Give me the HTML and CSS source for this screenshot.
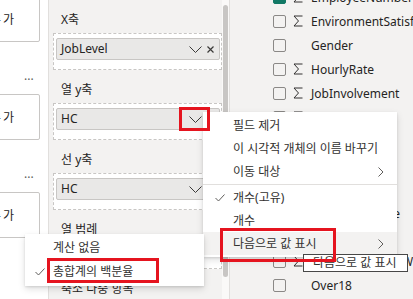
FILE: index.html
```html
<!DOCTYPE html>
<html lang="ko">
<head>
    <meta charset="UTF-8">
    <meta name="viewport" content="width=device-width, initial-scale=1.0">
    <title>시각화 필드</title>
    <link rel="stylesheet" href="styles.css">
</head>
<body>
<div class="app">
    <aside class="left">
        <div class="card first"><span>추가</span></div>
        <div class="more">···</div>
        <div class="card"><span>추가</span></div>
        <div class="more">···</div>
        <div class="card"><span>추가</span></div>
    </aside>

    <section class="viz">
        <div class="wells">
            <div class="label">X축</div>
            <div class="well">
                <div class="pill">
                    <span class="name">JobLevel</span>
                    <svg class="chev" width="13" height="7" viewBox="0 0 13 7"><polyline points="0.5,0.5 6.5,6.5 12.5,0.5"/></svg>
                    <svg class="close" width="7" height="7" viewBox="0 0 7 7"><path d="M0.5 0.5L6.5 6.5M6.5 0.5L0.5 6.5"/></svg>
                </div>
                <div class="drop"></div>
            </div>

            <div class="label">열 y축</div>
            <div class="well">
                <div class="pill">
                    <span class="name">HC</span>
                    <svg class="chev" width="13" height="7" viewBox="0 0 13 7"><polyline points="0.5,0.5 6.5,6.5 12.5,0.5"/></svg>
                    <span class="close"></span>
                </div>
                <div class="drop"></div>
            </div>

            <div class="label">선 y축</div>
            <div class="well">
                <div class="pill">
                    <span class="name">HC</span>
                    <svg class="chev" width="13" height="7" viewBox="0 0 13 7"><polyline points="0.5,0.5 6.5,6.5 12.5,0.5"/></svg>
                    <span class="close"></span>
                </div>
                <div class="drop"></div>
            </div>

            <div class="label">열 범례</div>
            <div class="well empty"></div>

            <div class="label">축소 다중 항목</div>
        </div>
        <div class="track"><div class="thumb"></div></div>
    </section>

    <section class="fields">
        <ul class="list">
            <li><span class="box on"></span><span class="sum"><svg width="10" height="12" viewBox="0 0 10 12"><polyline points="9.5,1 1,1 5.5,6 1,11 9.5,11"/></svg></span>EmployeeNumber</li>
            <li><span class="box"></span><span class="sum"><svg width="10" height="12" viewBox="0 0 10 12"><polyline points="9.5,1 1,1 5.5,6 1,11 9.5,11"/></svg></span>EnvironmentSatisfaction</li>
            <li><span class="box"></span><span class="sum"></span>Gender</li>
            <li><span class="box"></span><span class="sum"><svg width="10" height="12" viewBox="0 0 10 12"><polyline points="9.5,1 1,1 5.5,6 1,11 9.5,11"/></svg></span>HourlyRate</li>
            <li><span class="box"></span><span class="sum"><svg width="10" height="12" viewBox="0 0 10 12"><polyline points="9.5,1 1,1 5.5,6 1,11 9.5,11"/></svg></span>JobInvolvement</li>
            <li><span class="box"></span><span class="sum"><svg width="10" height="12" viewBox="0 0 10 12"><polyline points="9.5,1 1,1 5.5,6 1,11 9.5,11"/></svg></span>JobLevel</li>
            <li><span class="box"></span><span class="sum"></span>JobRole</li>
            <li><span class="box"></span><span class="sum"><svg width="10" height="12" viewBox="0 0 10 12"><polyline points="9.5,1 1,1 5.5,6 1,11 9.5,11"/></svg></span>JobSatisfaction</li>
            <li><span class="box"></span><span class="sum"></span>MaritalStatus</li>
            <li><span class="box"></span><span class="sum"><svg width="10" height="12" viewBox="0 0 10 12"><polyline points="9.5,1 1,1 5.5,6 1,11 9.5,11"/></svg></span>MonthlyIncome</li>
            <li><span class="box"></span><span class="sum"><svg width="10" height="12" viewBox="0 0 10 12"><polyline points="9.5,1 1,1 5.5,6 1,11 9.5,11"/></svg></span>MonthlyRate</li>
            <li><span class="box"></span><span class="sum"><svg width="10" height="12" viewBox="0 0 10 12"><polyline points="9.5,1 1,1 5.5,6 1,11 9.5,11"/></svg></span>NumCompaniesWorked</li>
            <li><span class="box"></span><span class="sum"></span>Over18</li>
        </ul>
    </section>
</div>

<!-- context menu on the HC field -->
<div class="menu">
    <div class="item">필드 제거</div>
    <div class="item">이 시각적 개체의 이름 바꾸기</div>
    <div class="item">이동 대상<svg class="arrow" width="6" height="10" viewBox="0 0 6 10"><polyline points="0.5,0.5 5,5 0.5,9.5"/></svg></div>
    <div class="sep"></div>
    <div class="item"><svg class="check" width="10" height="8" viewBox="0 0 10 8"><polyline points="0.5,4 3.5,7 9.5,0.5"/></svg>개수(고유)</div>
    <div class="item">개수</div>
    <div class="item hover">다음으로 값 표시<svg class="arrow" width="6" height="10" viewBox="0 0 6 10"><polyline points="0.5,0.5 5,5 0.5,9.5"/></svg></div>
</div>

<div class="submenu">
    <div class="item">계산 없음</div>
    <div class="item"><svg class="check" width="10" height="8" viewBox="0 0 10 8"><polyline points="0.5,4 3.5,7 9.5,0.5"/></svg>총합계의 백분율</div>
</div>

<div class="tip">다음으로 값 표시</div>

<div class="mark mark-chev"></div>
<div class="mark mark-item"></div>
<div class="mark mark-sub"></div>
</body>
</html>
```

FILE: styles.css
```css
/* styles.css */

* { box-sizing: border-box; }

body { margin: 0; width: 413px; height: 299px; overflow: hidden; position: relative; font-family: "Noto Sans", "Noto Sans CJK KR", sans-serif; font-size: 12px; color: #252423; background: #fff; }

.app { display: flex; height: 299px; }

/* left column with the cut-off cards */
.left { width: 49px; flex: none; background: #fff; border-right: 1px solid #e1dfdd; overflow: hidden; }

.card { width: 50px; height: 46px; margin-left: -10px; border: 1px solid #c8c6c4; border-radius: 2px; display: flex; align-items: center; justify-content: flex-end; padding-right: 23px; white-space: nowrap; }

.card span { letter-spacing: 2px; }

.card.first { margin-top: -4px; }

.more { height: 52px; padding: 30px 0 0 24px; line-height: 16px; color: #605e5c; font-size: 12px; letter-spacing: 0; }

/* visual fields pane */
.viz { width: 180px; flex: none; display: flex; background: #f3f2f1; }

.wells { flex: 1; padding: 11px 0 0 4px; }

.label { height: 18px; line-height: 18px; padding-left: 8px; margin-bottom: 4px; white-space: nowrap; }

.well { height: 37px; margin-bottom: 11px; border: 1px dashed #c8c6c4; background: #fff; padding: 4px 1px 0 2px; }

.well.empty { height: 26px; }

.pill { height: 22px; display: flex; align-items: center; padding: 0 5px 0 4px; background: #e9e8e7; border: 1px solid #c8c6c4; border-radius: 2px; }

.pill .name { flex: 1; line-height: 20px; }

.chev { margin-right: 5px; fill: none; stroke: #3b3a39; stroke-width: 1; }

.close { width: 7px; height: 7px; fill: none; stroke: #3b3a39; stroke-width: 1.2; }

.drop { height: 9px; }

.track { width: 7px; flex: none; background: #faf9f8; padding: 5px 1px 0 1px; }

.thumb { width: 5px; height: 272px; border-radius: 3px; background: #c8c6c4; }

/* data fields list */
.fields { flex: 1; overflow: hidden; background: #f3f2f1; border-left: 1px solid #e1dfdd; }

.list { list-style: none; margin: -15px 0 0; padding: 0; }

.list li { height: 24px; display: flex; align-items: center; padding-left: 43px; white-space: nowrap; }

.box { width: 13px; height: 13px; flex: none; border: 1px solid #8a8886; border-radius: 2px; margin-right: 7px; }

.box.on { background: #117865; border-color: #117865; }

.sum { width: 18px; flex: none; display: flex; }

.sum svg { fill: none; stroke: #323130; stroke-width: 1; }

/* context menus */
.menu, .submenu { position: absolute; background: #fff; box-shadow: 0 3px 7px rgba(0, 0, 0, 0.13), 0 1px 2px rgba(0, 0, 0, 0.11); color: #323130; }

.menu { left: 203px; top: 112px; width: 194px; padding: 2px 0; }

.submenu { left: 25px; top: 234px; width: 179px; padding: 2px 0; }

.item { position: relative; height: 23px; line-height: 23px; padding-left: 30px; white-space: nowrap; }

.submenu .item { height: 24px; line-height: 24px; padding-left: 28px; }

.item.hover { background: #f3f2f1; }

.sep { height: 1px; margin: 1px 0; background: #e1dfdd; }

.check { position: absolute; left: 12px; top: 8px; fill: none; stroke: #605e5c; stroke-width: 1; }

.submenu .check { left: 10px; }

.arrow { position: absolute; right: 13px; top: 7px; fill: none; stroke: #605e5c; stroke-width: 1; }

.tip { position: absolute; left: 303px; top: 254px; width: 105px; height: 18px; line-height: 16px; padding-left: 9px; background: #fff; border: 1px solid #474747; color: #323130; white-space: nowrap; }

/* red annotation boxes */
.mark { position: absolute; border: 3px solid #e5141f; }

.mark-chev { left: 179px; top: 107px; width: 31px; height: 24px; }

.mark-item { left: 220px; top: 228px; width: 116px; height: 34px; }

.mark-sub { left: 47px; top: 258px; width: 112px; height: 25px; }
```
